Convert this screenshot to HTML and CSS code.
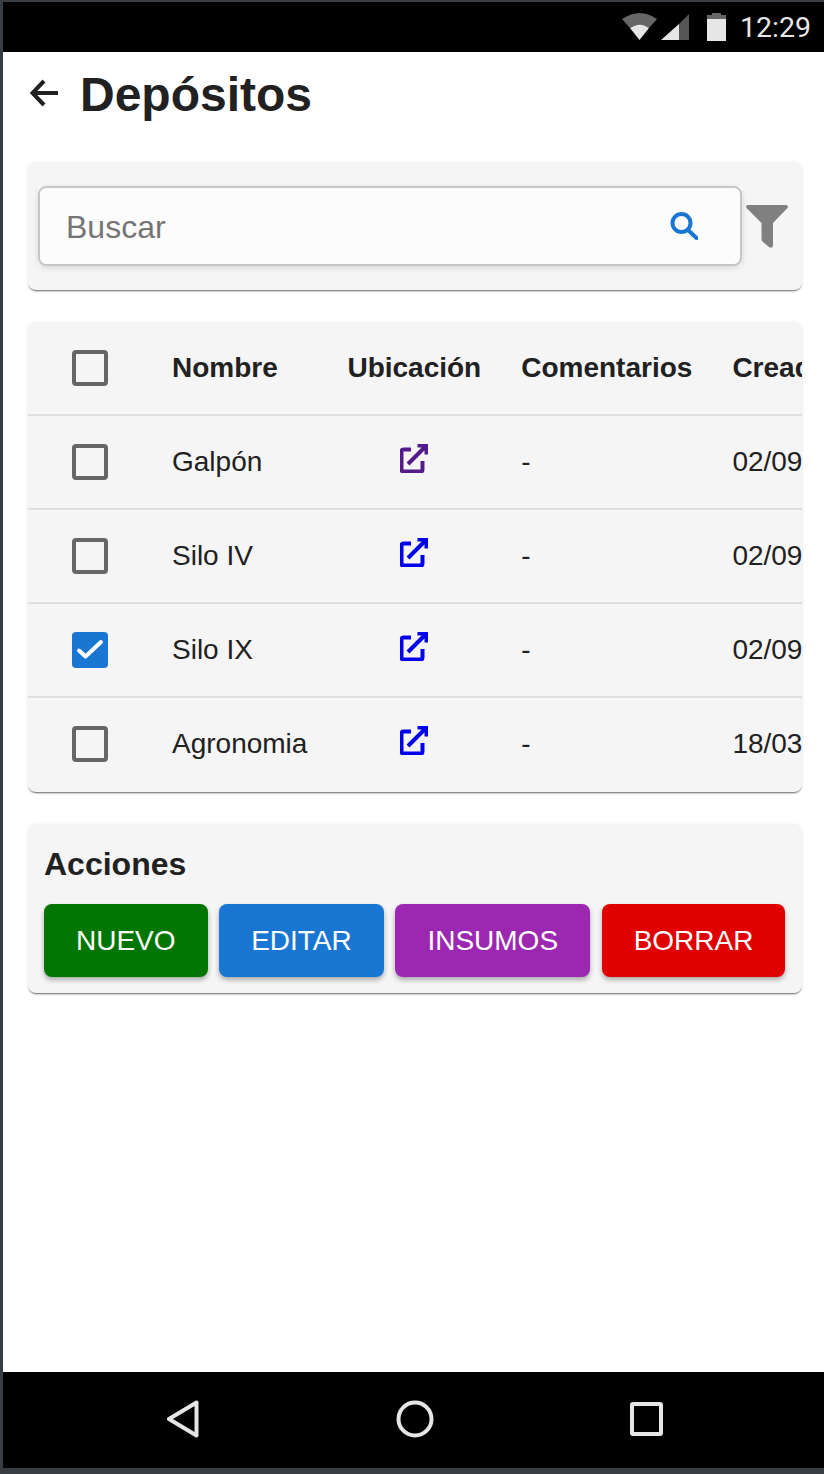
FILE: index.html
```html
<!DOCTYPE html>
<html lang="es">

<head>
  <meta charset="UTF-8">
  <meta name="viewport" content="width=device-width, initial-scale=1.0">
  <title>Depósitos</title>
  <link rel="stylesheet" href="styles.css">
</head>

<body>
  <div class="phone">
    <div class="status-bar">
      <svg class="status-icons" width="68" height="30" viewBox="0 0 68 30">
        <path d="M0 7 Q18 -5 35 7 L27 16 Q18 9 8 16 Z" fill="#666"/>
        <path d="M8 16 Q18 9 27 16 L17.5 28 Z" fill="#e6e6e6"/>
        <path d="M67 2 V28 H57 V12 Z" fill="#555"/>
        <path d="M57 12 V28 H39 Z" fill="#e6e6e6"/>
      </svg>
      <svg class="battery" width="19" height="28" viewBox="0 0 19 28">
        <path d="M5 0 H14 V2 H19 V7 H0 V2 H5 Z" fill="#666"/>
        <rect y="6" width="19" height="22" fill="#e6e6e6"/>
      </svg>
      <span class="clock">12:29</span>
    </div>

    <div class="content">
      <header class="page-header">
        <a href="#" class="back">
          <svg width="28" height="28" viewBox="0 0 28 28" fill="none" stroke="#212121" stroke-width="4">
            <path d="M28 14 H3 M14 2 L2.5 14 L14 26"/>
          </svg>
        </a>
        <h1>Depósitos</h1>
      </header>

      <section class="card search-card">
        <div class="search-wrap">
          <div class="search-field">
            <input type="text" placeholder="Buscar">
            <svg width="28" height="28" viewBox="0 0 28 28" fill="none" stroke="#1976d2" stroke-width="4">
              <circle cx="11.5" cy="11" r="9"/>
              <path d="M18 18 L26.5 26" stroke-linecap="round"/>
            </svg>
          </div>
        </div>
        <svg class="filter" width="42" height="43" viewBox="0 0 42 43">
          <path d="M2 0 H40 C42 0 42.5 2 41 3.5 L27 18 V40 C27 42.5 25 43.5 23 42 L17 37 C16 36 15.5 35.5 15.5 34 V18 L1 3.5 C-0.5 2 0 0 2 0 Z" fill="#808080"/>
        </svg>
      </section>

      <section class="card table-card">
        <table>
          <tr>
            <th class="check-col"><span class="check"></span></th>
            <th>Nombre</th>
            <th>Ubicación</th>
            <th>Comentarios</th>
            <th>Creado</th>
          </tr>
          <tr>
            <td class="check-col"><span class="check"></span></td>
            <td>Galpón</td>
            <td class="center"><a href="#" class="visited"><svg class="ext" width="28" height="29" viewBox="0 0 28 29"><path d="M11 5.5 H3.5 a2 2 0 0 0 -2 2 V25.5 a2 2 0 0 0 2 2 H20.5 a2 2 0 0 0 2 -2 V17 M8 20 L25 3 M17.5 1.5 H26.5 V10.5"/></svg></a></td>
            <td>-</td>
            <td>02/09/2021</td>
          </tr>
          <tr>
            <td class="check-col"><span class="check"></span></td>
            <td>Silo IV</td>
            <td class="center"><a href="#"><svg class="ext" width="28" height="29" viewBox="0 0 28 29"><path d="M11 5.5 H3.5 a2 2 0 0 0 -2 2 V25.5 a2 2 0 0 0 2 2 H20.5 a2 2 0 0 0 2 -2 V17 M8 20 L25 3 M17.5 1.5 H26.5 V10.5"/></svg></a></td>
            <td>-</td>
            <td>02/09/2021</td>
          </tr>
          <tr>
            <td class="check-col">
              <span class="check checked">
                <svg width="36" height="36" viewBox="0 0 36 36" fill="none" stroke="#fff" stroke-width="4" stroke-linecap="round" stroke-linejoin="round"><path d="M7 18.5 L13.5 24.5 L29 10"/></svg>
              </span>
            </td>
            <td>Silo IX</td>
            <td class="center"><a href="#"><svg class="ext" width="28" height="29" viewBox="0 0 28 29"><path d="M11 5.5 H3.5 a2 2 0 0 0 -2 2 V25.5 a2 2 0 0 0 2 2 H20.5 a2 2 0 0 0 2 -2 V17 M8 20 L25 3 M17.5 1.5 H26.5 V10.5"/></svg></a></td>
            <td>-</td>
            <td>02/09/2021</td>
          </tr>
          <tr>
            <td class="check-col"><span class="check"></span></td>
            <td>Agronomia</td>
            <td class="center"><a href="#"><svg class="ext" width="28" height="29" viewBox="0 0 28 29"><path d="M11 5.5 H3.5 a2 2 0 0 0 -2 2 V25.5 a2 2 0 0 0 2 2 H20.5 a2 2 0 0 0 2 -2 V17 M8 20 L25 3 M17.5 1.5 H26.5 V10.5"/></svg></a></td>
            <td>-</td>
            <td>18/03/2022</td>
          </tr>
        </table>
      </section>

      <section class="card actions-card">
        <h2>Acciones</h2>
        <div class="actions">
          <button class="btn green">NUEVO</button>
          <button class="btn blue">EDITAR</button>
          <button class="btn purple">INSUMOS</button>
          <button class="btn red">BORRAR</button>
        </div>
      </section>
    </div>

    <div class="nav-bar">
      <svg width="32" height="38" viewBox="0 0 32 38" fill="none" stroke="#e6e6e6" stroke-width="4" stroke-linejoin="round"><path d="M29.5 2.5 V35.5 L2 19 Z"/></svg>
      <svg width="38" height="38" viewBox="0 0 38 38" fill="none" stroke="#e6e6e6" stroke-width="4"><circle cx="19" cy="19" r="16.5"/></svg>
      <svg class="nav-square" width="33" height="34" viewBox="0 0 33 34" fill="none" stroke="#e6e6e6" stroke-width="4" stroke-linejoin="round"><rect x="2" y="2" width="29" height="30" rx="1"/></svg>
    </div>
  </div>
</body>

</html>
```

FILE: styles.css
```css
* {
  box-sizing: border-box;
}

html,
body {
  margin: 0;
  padding: 0;
}

body {
  background-color: #383e42;
  font-family: "Liberation Sans", Arial, sans-serif;
  color: #212121;
}

.phone {
  display: flex;
  flex-direction: column;
  height: 1474px;
  padding: 2px 0 6px 3px;
  overflow: hidden;
}

/* barra de estado */
.status-bar {
  display: flex;
  align-items: center;
  height: 50px;
  padding-right: 13px;
  background-color: #000;
}

.status-icons {
  margin-left: auto;
}

.battery {
  margin-left: 17px;
}

.clock {
  margin-left: 14px;
  padding-top: 1px;
  font-family: Roboto, sans-serif;
  font-size: 28.5px;
  color: #e6e6e6;
}

.content {
  flex: 1;
  padding: 0 22px 0 25px;
  background-color: #fff;
}

.page-header {
  display: flex;
  align-items: center;
  height: 84px;
  margin-bottom: 26px;
}

.back {
  display: flex;
  margin-left: 2px;
  margin-bottom: 2px;
}

h1 {
  margin: 0 0 0 22px;
  font-size: 48px;
  font-weight: bold;
}

.card {
  margin-bottom: 32px;
  background-color: #f5f5f5;
  border-radius: 8px;
  box-shadow: 0 2px 2px -1px rgba(0, 0, 0, 0.6), 0 0 4px rgba(0, 0, 0, 0.05);
}

/* buscador */
.search-card {
  display: flex;
  align-items: center;
  height: 128px;
  padding: 0 10px;
}

.search-wrap {
  width: 704px;
  background-color: #fff;
}

.search-field {
  display: flex;
  align-items: center;
  height: 80px;
  padding: 0 42px 0 26px;
  background-color: #fcfcfc;
  border: 2px solid #c6c6c6;
  border-radius: 8px;
  box-shadow: 0 2px 6px rgba(0, 0, 0, 0.12);
}

.search-field input {
  flex: 1;
  min-width: 0;
  padding: 2px 0 0;
  border: 0;
  outline: 0;
  background: transparent;
  font-family: inherit;
  font-size: 32px;
  color: #212121;
}

.search-field input::placeholder {
  color: #757575;
  opacity: 1;
}

.filter {
  margin-left: 4px;
  flex-shrink: 0;
}

/* tabla */
.table-card {
  overflow: hidden;
}

table {
  width: max-content;
  border-collapse: separate;
  border-spacing: 0;
  font-size: 28px;
}

th,
td {
  height: 94px;
  padding: 0 20px;
  text-align: left;
  border-bottom: 2px solid #e0e0e0;
}

tr:last-child td {
  border-bottom-color: transparent;
}

.check-col {
  padding: 0 44px;
  line-height: 0;
}

.center {
  text-align: center;
}

.check {
  display: inline-block;
  width: 36px;
  height: 36px;
  border: 4px solid #666;
  border-radius: 4px;
}

.check.checked {
  background-color: #1976d2;
  border: 0;
}

a {
  color: #0000ee;
}

a.visited {
  color: #551a8b;
}

.ext {
  fill: none;
  stroke: currentColor;
  stroke-width: 4;
  vertical-align: 1px;
}

/* acciones */
.actions-card {
  padding: 16px;
}

h2 {
  margin: 0 0 16px;
  font-size: 32px;
  line-height: 48px;
}

.actions {
  display: flex;
  gap: 11.6px;
}

.btn {
  height: 73px;
  padding: 0 32px;
  border: 0;
  border-radius: 8px;
  font-family: inherit;
  font-size: 28px;
  color: #fff;
  box-shadow: 0 3px 5px rgba(0, 0, 0, 0.3);
}

.green {
  background-color: #007500;
}

.blue {
  background-color: #1976d2;
}

.purple {
  background-color: #9c27b0;
}

.red {
  background-color: #e00000;
}

/* barra de navegacion */
.nav-bar {
  display: flex;
  align-items: center;
  height: 96px;
  padding: 0 0 2px 164px;
  gap: 197px;
  background-color: #000;
}

.nav-square {
  margin-left: -1px;
}
```
